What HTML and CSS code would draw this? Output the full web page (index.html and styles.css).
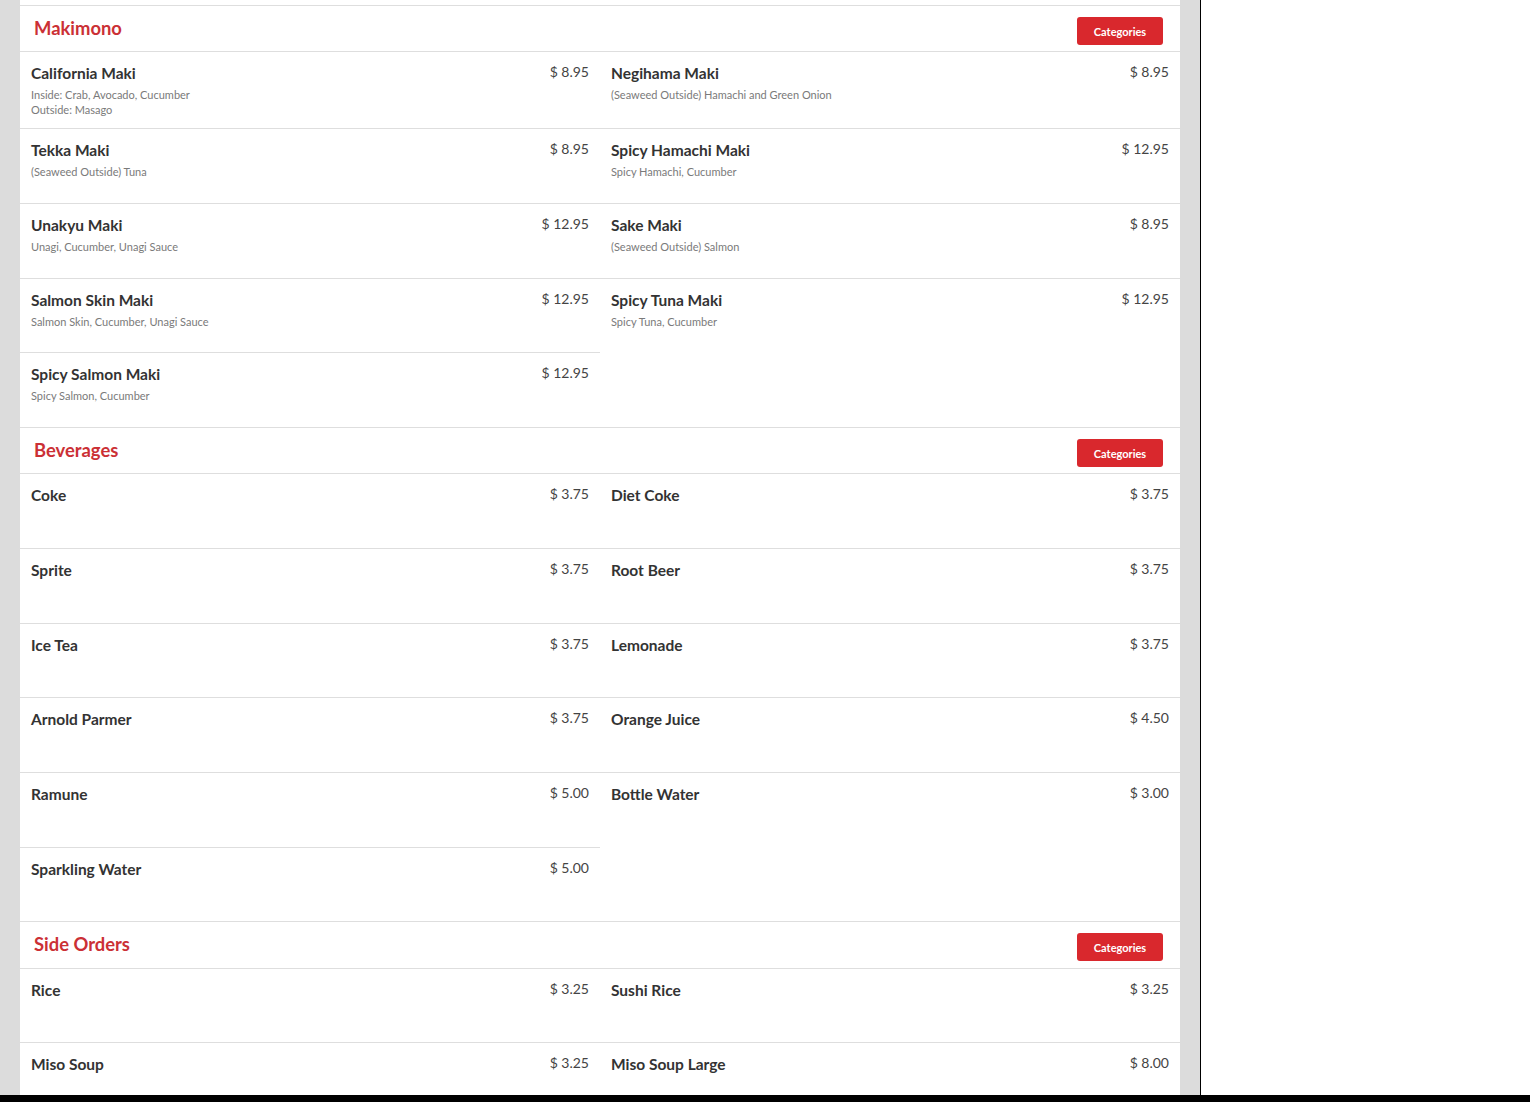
FILE: index.html
```html
<!DOCTYPE html>
<html>
<head>
<meta charset="utf-8">
<link rel="stylesheet" href="styles.css">
</head>
<body>
<div class="frame">
  <div class="panel">
    <div class="spacer"></div>

    <section class="section">
      <div class="sec-head"><h2 class="sec-title">Makimono</h2><button class="cat-btn">Categories</button></div>
      <div class="items">
        <div class="item"><div class="row"><span class="name">California Maki</span><span class="price">$ 8.95</span></div><div class="desc">Inside: Crab, Avocado, Cucumber<br>Outside: Masago</div></div>
        <div class="item"><div class="row"><span class="name">Negihama Maki</span><span class="price">$ 8.95</span></div><div class="desc">(Seaweed Outside) Hamachi and Green Onion</div></div>
        <div class="item"><div class="row"><span class="name">Tekka Maki</span><span class="price">$ 8.95</span></div><div class="desc">(Seaweed Outside) Tuna</div></div>
        <div class="item"><div class="row"><span class="name">Spicy Hamachi Maki</span><span class="price">$ 12.95</span></div><div class="desc">Spicy Hamachi, Cucumber</div></div>
        <div class="item"><div class="row"><span class="name">Unakyu Maki</span><span class="price">$ 12.95</span></div><div class="desc">Unagi, Cucumber, Unagi Sauce</div></div>
        <div class="item"><div class="row"><span class="name">Sake Maki</span><span class="price">$ 8.95</span></div><div class="desc">(Seaweed Outside) Salmon</div></div>
        <div class="item"><div class="row"><span class="name">Salmon Skin Maki</span><span class="price">$ 12.95</span></div><div class="desc">Salmon Skin, Cucumber, Unagi Sauce</div></div>
        <div class="item"><div class="row"><span class="name">Spicy Tuna Maki</span><span class="price">$ 12.95</span></div><div class="desc">Spicy Tuna, Cucumber</div></div>
        <div class="item"><div class="row"><span class="name">Spicy Salmon Maki</span><span class="price">$ 12.95</span></div><div class="desc">Spicy Salmon, Cucumber</div></div>
      </div>
    </section>

    <section class="section">
      <div class="sec-head"><h2 class="sec-title">Beverages</h2><button class="cat-btn">Categories</button></div>
      <div class="items">
        <div class="item"><div class="row"><span class="name">Coke</span><span class="price">$ 3.75</span></div></div>
        <div class="item"><div class="row"><span class="name">Diet Coke</span><span class="price">$ 3.75</span></div></div>
        <div class="item"><div class="row"><span class="name">Sprite</span><span class="price">$ 3.75</span></div></div>
        <div class="item"><div class="row"><span class="name">Root Beer</span><span class="price">$ 3.75</span></div></div>
        <div class="item"><div class="row"><span class="name">Ice Tea</span><span class="price">$ 3.75</span></div></div>
        <div class="item"><div class="row"><span class="name">Lemonade</span><span class="price">$ 3.75</span></div></div>
        <div class="item"><div class="row"><span class="name">Arnold Parmer</span><span class="price">$ 3.75</span></div></div>
        <div class="item"><div class="row"><span class="name">Orange Juice</span><span class="price">$ 4.50</span></div></div>
        <div class="item"><div class="row"><span class="name">Ramune</span><span class="price">$ 5.00</span></div></div>
        <div class="item"><div class="row"><span class="name">Bottle Water</span><span class="price">$ 3.00</span></div></div>
        <div class="item"><div class="row"><span class="name">Sparkling Water</span><span class="price">$ 5.00</span></div></div>
      </div>
    </section>

    <section class="section">
      <div class="sec-head"><h2 class="sec-title">Side Orders</h2><button class="cat-btn">Categories</button></div>
      <div class="items">
        <div class="item"><div class="row"><span class="name">Rice</span><span class="price">$ 3.25</span></div></div>
        <div class="item"><div class="row"><span class="name">Sushi Rice</span><span class="price">$ 3.25</span></div></div>
        <div class="item"><div class="row"><span class="name">Miso Soup</span><span class="price">$ 3.25</span></div></div>
        <div class="item"><div class="row"><span class="name">Miso Soup Large</span><span class="price">$ 8.00</span></div></div>
      </div>
    </section>
  </div>
</div>
<div class="bottom-bar"></div>
</body>
</html>
```

FILE: styles.css
```css
html, body {
  margin: 0;
  padding: 0;
  background: #ffffff;
  font-family: "Lato", "Liberation Sans", sans-serif;
  color: #333333;
}

.frame {
  width: 1160px;
  padding: 0 20px;
  background: #dcdcdc;
  border-right: 1px solid #000000;
  min-height: 100vh;
}

.panel {
  background: #ffffff;
  min-height: 100vh;
}

.spacer {
  height: 5px;
}

.section {
  border-top: 1px solid #dedede;
}

.sec-head {
  height: 45.33px;
  display: flex;
  align-items: center;
  justify-content: space-between;
  padding: 0 17px 0 14px;
}

.sec-title {
  margin: -2px 0 0 0;
  font-size: 18.4px;
  font-weight: 700;
  color: #cb3035;
}

.cat-btn {
  width: 86px;
  height: 28px;
  border: none;
  border-radius: 3px;
  background: #d9282d;
  color: #ffffff;
  font-family: "Lato", "Liberation Sans", sans-serif;
  font-size: 11px;
  font-weight: 700;
  padding: 0;
  margin-top: 5px;
}

.items {
  display: grid;
  grid-template-columns: 1fr 1fr;
}

.item {
  border-top: 1px solid #dedede;
  min-height: 74.67px;
  box-sizing: border-box;
  padding: 11px;
}

.row {
  display: flex;
  justify-content: space-between;
  align-items: flex-start;
  line-height: 20px;
}

.name {
  font-size: 15.5px;
  font-weight: 700;
  color: #333333;
}

.price {
  font-size: 14px;
  color: #444444;
  margin-top: -1px;
}

.desc {
  margin-top: 4px;
  font-size: 11px;
  line-height: 15px;
  color: #7a7a7a;
}

.bottom-bar {
  position: fixed;
  left: 0;
  right: 0;
  bottom: 0;
  height: 7px;
  background: #000000;
}
```
